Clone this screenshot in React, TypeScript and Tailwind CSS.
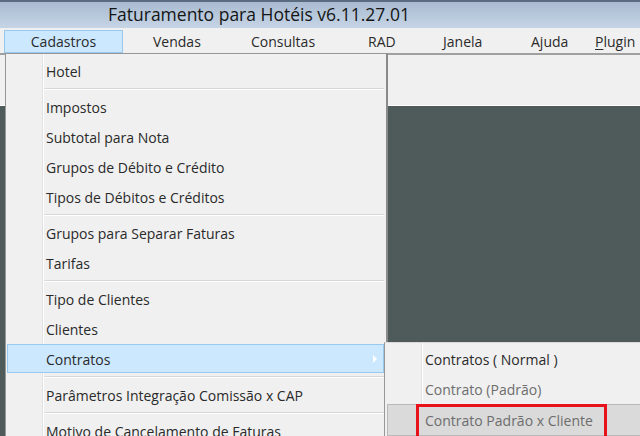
import React from "react";

type Entry = { label?: string; sep?: boolean; active?: boolean; arrow?: boolean };

const entries: Entry[] = [
  { label: "Hotel" },
  { sep: true },
  { label: "Impostos" },
  { label: "Subtotal para Nota" },
  { label: "Grupos de Débito e Crédito" },
  { label: "Tipos de Débitos e Créditos" },
  { sep: true },
  { label: "Grupos para Separar Faturas" },
  { label: "Tarifas" },
  { sep: true },
  { label: "Tipo de Clientes" },
  { label: "Clientes" },
  { label: "Contratos", active: true, arrow: true },
  { sep: true },
  { label: "Parâmetros Integração Comissão x CAP" },
  { sep: true },
  { label: "Motivo de Cancelamento de Faturas" },
];

const font = { fontFamily: '"Open Sans", "Noto Sans", sans-serif' };

export default function App() {
  return (
    <div
      className="relative w-[640px] h-[436px] overflow-hidden bg-[#f0f0f0] text-[#2a2a2a] flex flex-col"
      style={font}
    >
      {/* title bar */}
      <div className="h-[28px] shrink-0 border-t-2 border-[#5b6b80] bg-gradient-to-b from-[#a9bbd1] to-[#c6d5e6] flex items-center pl-[108px]">
        <span className="text-[17.5px] leading-none text-[#151515]">
          Faturamento para Hotéis v6.11.27.01
        </span>
      </div>

      {/* menu bar */}
      <div className="h-[25px] shrink-0 flex items-center text-[14px] pt-[1px]">
        <div className="w-[4px]" />
        <div className="w-[119px] h-[23px] bg-[#cce8ff] border border-[#99c8ee] flex items-center justify-center">
          Cadastros
        </div>
        <div className="w-[30px]" />
        <div className="w-[98px]">Vendas</div>
        <div className="w-[117px]">Consultas</div>
        <div className="w-[75px]">RAD</div>
        <div className="w-[88px]">Janela</div>
        <div className="w-[64px]">Ajuda</div>
        <div>
          <span className="underline underline-offset-2">P</span>lugin
        </div>
      </div>

      {/* toolbar panel */}
      <div className="h-[53px] shrink-0 border-t-2 border-[#a0a0a0] border-b border-b-white bg-[#f0f0f0]" />

      {/* MDI area */}
      <div className="flex-1 bg-[#4f5b5b]" />

      {/* dropdown */}
      <div className="absolute left-[5px] top-[53px] w-[383px] h-[400px] bg-[#f0f0f0] border border-[#979797] border-r-2 border-r-[#8a8a8a] text-[14px] pt-[2px]">
        <div className="absolute left-[36px] top-0 bottom-0 w-px bg-[#e2e2e2]" />
        <div className="absolute left-[37px] top-0 bottom-0 w-px bg-white" />
        {entries.map((e, i) =>
          e.sep ? (
            <div key={i} className="h-[6px] flex items-center pl-[37px] pr-[2px]">
              <div className="w-full border-t border-[#d7d7d7] border-b border-b-white" />
            </div>
          ) : (
            <div key={i} className="relative h-[30px] flex items-center">
              {e.active && (
                <div className="absolute left-[1px] right-[2px] top-0 bottom-[1px] bg-[#cce8ff] border border-[#99c8ee]" />
              )}
              <span className="relative pl-[40px]">{e.label}</span>
              {e.arrow && (
                <svg className="absolute right-[8px] top-[10px]" width="6" height="10" viewBox="0 0 6 10">
                  <path d="M1 1 L5 5 L1 9 Z" fill="#ffffff" />
                </svg>
              )}
            </div>
          )
        )}
      </div>

      {/* submenu */}
      <div className="absolute left-[384px] top-[342px] w-[260px] h-[100px] bg-[#f0f0f0] border border-[#979797] border-t-[#d9d9d9] text-[14px] pt-[1px]">
        <div className="absolute left-[36px] top-0 bottom-0 w-px bg-[#e2e2e2]" />
        <div className="absolute left-[37px] top-0 bottom-0 w-px bg-white" />
        <div className="relative h-[30px] flex items-center pl-[40px]">Contratos ( Normal )</div>
        <div className="relative h-[30px] flex items-center pl-[40px] text-[#6d6d6d]">Contrato (Padrão)</div>
        <div className="relative h-[32px] flex items-center text-[#6d6d6d]">
          <div className="absolute left-[2px] right-0 top-0 bottom-0 bg-[#dadada] border border-[#b9b9b9]" />
          <span className="relative pl-[40px]">Contrato Padrão x Cliente</span>
        </div>
        <div className="absolute left-[31px] top-[61px] w-[191px] h-[36px] border-[3px] border-[#e8121b]" />
      </div>
    </div>
  );
}
